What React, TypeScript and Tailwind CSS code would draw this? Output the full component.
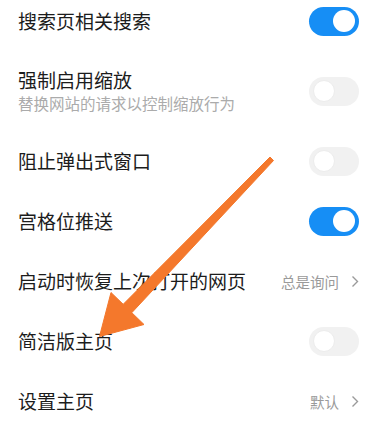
import React from "react";

type Row =
  | { title: string; sub?: string; kind: "toggle"; on: boolean }
  | { title: string; sub?: string; kind: "link"; value: string };

const rows: Row[] = [
  { title: "搜索页相关搜索", kind: "toggle", on: true },
  { title: "强制启用缩放", sub: "替换网站的请求以控制缩放行为", kind: "toggle", on: false },
  { title: "阻止弹出式窗口", kind: "toggle", on: false },
  { title: "宫格位推送", kind: "toggle", on: true },
  { title: "启动时恢复上次打开的网页", kind: "link", value: "总是询问" },
  { title: "简洁版主页", kind: "toggle", on: false },
  { title: "设置主页", kind: "link", value: "默认" },
];

const Toggle = ({ on }: { on: boolean }) =>
  on ? (
    <div className="w-[50px] h-[29px] rounded-full bg-[#168ef5] flex items-center justify-end pr-[4px] shrink-0">
      <div className="w-[22px] h-[22px] rounded-full bg-white" />
    </div>
  ) : (
    <div className="w-[50px] h-[29px] rounded-full bg-[#f1f1f1] flex items-center justify-start pl-[4px] shrink-0">
      <div className="w-[22px] h-[22px] rounded-full bg-white border border-[#ececec]" />
    </div>
  );

const Chevron = () => (
  <svg width="8" height="13" viewBox="0 0 8 13" className="shrink-0">
    <polyline points="1.5,1.5 6.5,6.5 1.5,11.5" fill="none" stroke="#9a9a9a" strokeWidth="1.4" />
  </svg>
);

export default function App() {
  return (
    <div
      className="relative w-[380px] h-[437px] overflow-hidden bg-white"
      style={{ fontFamily: '"Noto Sans CJK SC", "Noto Sans", sans-serif' }}
    >
      <div className="-mt-[9px] flex flex-col">
        {rows.map((r) => (
          <div
            key={r.title}
            className={`flex items-center justify-between pl-[18px] pr-[21px] ${r.sub ? "h-[80px]" : "h-[60px]"}`}
          >
            <div className="flex flex-col">
              <span className="text-[19px] leading-[24px] text-[#1c1c1c]">{r.title}</span>
              {r.sub && <span className="text-[15.5px] leading-[23px] text-[#ababab]">{r.sub}</span>}
            </div>
            {r.kind === "toggle" ? (
              <Toggle on={r.on} />
            ) : (
              <div className="flex items-center gap-[12px] pt-[1px]">
                <span className="text-[14.5px] leading-[20px] text-[#9a9a9a]">{r.value}</span>
                <Chevron />
              </div>
            )}
          </div>
        ))}
      </div>

      {/* orange annotation arrow */}
      <svg className="absolute inset-0 pointer-events-none" width="380" height="437" viewBox="0 0 380 437">
        <polygon
          points="270,157 273.5,160.5 131.8,312.7 144,324.5 99.5,336.5 111,292.5 123.2,304.3"
          fill="#f4782c"
          stroke="#f4782c"
          strokeWidth="1"
          strokeLinejoin="round"
        />
      </svg>
    </div>
  );
}
